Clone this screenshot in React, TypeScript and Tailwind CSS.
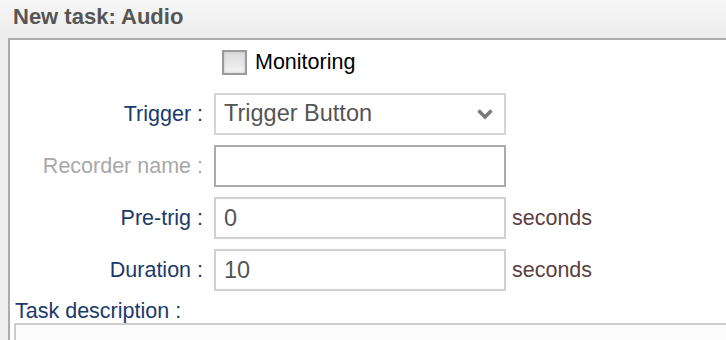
import React from "react";

const font = { fontFamily: '"Liberation Sans", Arial, sans-serif' };

function FieldRow({
  label,
  muted,
  children,
  suffix,
}: {
  label: string;
  muted?: boolean;
  children: React.ReactNode;
  suffix?: string;
}) {
  return (
    <div className="flex items-center h-[42px]">
      <label
        className={`w-[193px] shrink-0 text-right text-[21.5px] leading-[21px] ${
          muted ? "text-[#a8a8a8]" : "text-[#1b3a6b]"
        }`}
      >
        {label}
      </label>
      <div className="ml-[11px] w-[292px] h-[42px] shrink-0">{children}</div>
      {suffix && (
        <span className="ml-[6px] text-[21.5px] leading-[21px] text-[#5b3e3e]">{suffix}</span>
      )}
    </div>
  );
}

function TextBox({ value, dark }: { value?: string; dark?: boolean }) {
  return (
    <input
      type="text"
      defaultValue={value}
      className={`w-full h-full border-2 bg-white pl-[8px] text-[23.5px] text-[#555] outline-none ${
        dark ? "border-[#ababab]" : "border-[#d0d0d0]"
      }`}
      style={font}
    />
  );
}

export default function App() {
  return (
    <div className="w-[726px] h-[340px] overflow-hidden bg-[#eeeeee] flex flex-col" style={font}>
      <div className="h-[38px] shrink-0 bg-linear-to-b from-[#f6f6f6] to-[#ececec] pl-[13px] pt-[6px]">
        <h1 className="text-[22px] leading-[21px] font-bold text-[#555]">New task: Audio</h1>
      </div>

      <div className="flex-1 ml-[8px] border-l-2 border-t-2 border-[#acacac] bg-white flex flex-col">
        <div className="mt-[10px] pl-[212px] flex items-center h-[25px]">
          <span className="w-[25px] h-[25px] border-2 border-[#9a9a9a] bg-linear-to-b from-[#dcdcdc] to-[#f3f3f3] shadow-[inset_0_0_3px_#c4c4c4]" />
          <span className="ml-[8px] text-[21.5px] leading-[21px] text-black">Monitoring</span>
        </div>

        <div className="mt-[18px] flex flex-col gap-[10px]">
          <FieldRow label="Trigger :">
            <div className="w-full h-full border-2 border-[#d4d4d4] bg-white flex items-center justify-between pl-[8px] pr-[10px]">
              <span className="text-[23.5px] text-[#555]">Trigger Button</span>
              <svg width="18" height="12" viewBox="0 0 18 12">
                <path d="M2.5 2.5 L9 9 L15.5 2.5" fill="none" stroke="#7a7a7a" strokeWidth="3.6" />
              </svg>
            </div>
          </FieldRow>
          <FieldRow label="Recorder name :" muted>
            <TextBox dark />
          </FieldRow>
          <FieldRow label="Pre-trig :" suffix="seconds">
            <TextBox value="0" />
          </FieldRow>
          <FieldRow label="Duration :" suffix="seconds">
            <TextBox value="10" />
          </FieldRow>
        </div>

        <div className="mt-[10px] pl-[5px] text-[21.5px] leading-[21px] text-[#1b3a6b]">Task description :</div>
        <div className="mt-[1px] ml-[4px] flex-1 border-l-2 border-t-2 border-[#cccccc] bg-[#fbfbfb]" />
      </div>
    </div>
  );
}
